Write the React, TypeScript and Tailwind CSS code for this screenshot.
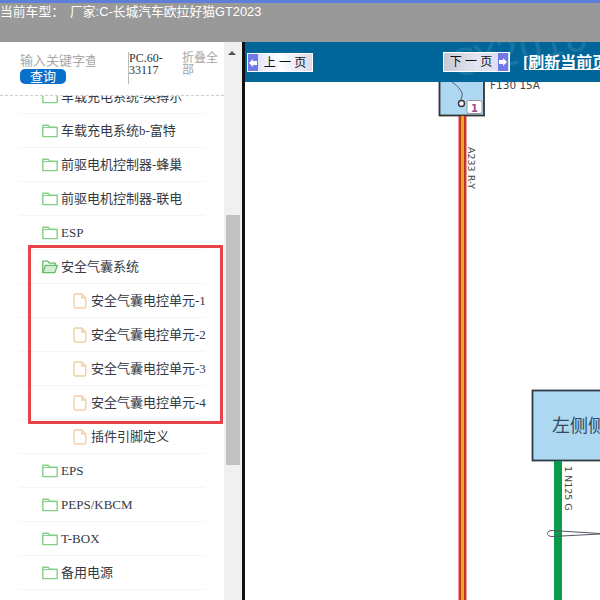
interface TreeRow {
  label: string;
  kind: "folder" | "open" | "file";
}

const rows: TreeRow[] = [
  { label: "车载充电系统-英搏尔", kind: "folder" },
  { label: "车载充电系统b-富特", kind: "folder" },
  { label: "前驱电机控制器-蜂巢", kind: "folder" },
  { label: "前驱电机控制器-联电", kind: "folder" },
  { label: "ESP", kind: "folder" },
  { label: "安全气囊系统", kind: "open" },
  { label: "安全气囊电控单元-1", kind: "file" },
  { label: "安全气囊电控单元-2", kind: "file" },
  { label: "安全气囊电控单元-3", kind: "file" },
  { label: "安全气囊电控单元-4", kind: "file" },
  { label: "插件引脚定义", kind: "file" },
  { label: "EPS", kind: "folder" },
  { label: "PEPS/KBCM", kind: "folder" },
  { label: "T-BOX", kind: "folder" },
  { label: "备用电源", kind: "folder" },
  { label: "空调系统", kind: "folder" },
];

function FolderIcon() {
  return (
    <svg width="16" height="14" viewBox="0 0 16 14" fill="none" stroke="#85cf88" strokeWidth="1.4" className="shrink-0">
      <path d="M0.8 12.6V1.2h5.4l1.4 2h7.6v9.4z" strokeLinejoin="round" />
      <path d="M0.8 3.6h14.4" strokeWidth="1" />
    </svg>
  );
}

function OpenFolderIcon() {
  return (
    <svg width="16" height="14" viewBox="0 0 16 14" fill="#d3efd3" stroke="#62bb68" strokeWidth="1.3" className="shrink-0">
      <path d="M0.8 12.6V1.2h5l1.4 2h6v2.2" strokeLinejoin="round" fill="none" />
      <path d="M0.8 12.6l2.6-7.2h12l-2.6 7.2z" strokeLinejoin="round" />
    </svg>
  );
}

function FileIcon() {
  return (
    <svg width="14" height="16" viewBox="0 0 14 16" fill="none" stroke="#f3cfa4" strokeWidth="1.4" className="shrink-0">
      <path d="M2.4 1h6.4l4 4v8.6a1.4 1.4 0 0 1-1.4 1.4H2.4A1.4 1.4 0 0 1 1 13.6V2.4A1.4 1.4 0 0 1 2.4 1z" strokeLinejoin="round" />
      <path d="M8.8 1v4h4" />
    </svg>
  );
}

function Row({ row }: { row: TreeRow }) {
  return (
    <div className={`flex h-[34px] w-[184px] shrink-0 items-center border-b border-[#f5f5f5] ${row.kind === "file" ? "pl-[53px]" : "pl-[22px]"}`}>
      {row.kind === "folder" && <FolderIcon />}
      {row.kind === "open" && <OpenFolderIcon />}
      {row.kind === "file" && <FileIcon />}
      <span className={`whitespace-nowrap font-['Liberation_Serif','Noto_Sans_CJK_SC',serif] text-[13px] text-[#333a45] ${row.kind === "file" ? "ml-[4px]" : "ml-[3px]"}`}>{row.label}</span>
    </div>
  );
}

function Sidebar() {
  return (
    <div className="flex h-full w-[242px] shrink-0 bg-white">
      <div className="flex h-full w-[224px] flex-col">
        <div className="flex h-[53px] shrink-0 items-start">
          <div className="ml-[20px] mt-[11px] w-[76px]">
            <div className="h-[16px] w-[75px] overflow-hidden whitespace-nowrap text-[13px] leading-[16px] text-[#a8a8a8]">输入关键字查询</div>
            <div className="h-[15px] w-[46px] rounded-[5px] bg-[#0a6fc9] text-center text-[13px] leading-[15px] text-white">查询</div>
          </div>
          <div className="ml-[32px] mt-[10px] h-[32px] w-[50px] whitespace-nowrap border-l border-[#bbb] font-['Liberation_Serif',serif] text-[12px] leading-[12px] text-[#333]">
            PC.60-<br />33117
          </div>
          <div className="ml-[4px] mt-[10px] w-[37px] text-[12px] leading-[12px] text-[#a8a8a8]">折叠全部</div>
        </div>
        <div className="relative min-h-0 flex-1 overflow-hidden border-t border-dashed border-[#ccc]">
          <div className="ml-[20px] mt-[-16px] flex flex-col">
            {rows.map((row) => (
              <Row key={row.label} row={row} />
            ))}
          </div>
          <div className="absolute left-[28px] top-[149px] h-[179px] w-[195px] border-[3px] border-[#e8434a]" />
        </div>
      </div>
      <div className="relative h-full w-[18px] bg-[#f0f0f0]">
        <div className="absolute left-[4px] top-[9px] h-0 w-0 border-x-[4px] border-b-[4px] border-x-transparent border-b-[#555]" />
        <div className="absolute left-[2px] top-[173px] h-[250px] w-[14px] bg-[#c1c1c1]" />
      </div>
    </div>
  );
}

function Diagram() {
  return (
    <svg width="355" height="518" viewBox="0 0 355 518" className="block">
      <text x="245" y="7" fontSize="10.5" fill="#444" fontFamily="DejaVu Sans">F130 15A</text>
      <rect x="194.5" y="-6" width="44.5" height="39.5" fill="#aed8f2" stroke="#333" strokeWidth="1.8" />
      <path d="M207 0c7 5 11 10 10 14c-1 3-1 4-1 4" fill="none" stroke="#556" />
      <circle cx="216.5" cy="21.5" r="3" fill="#fff" stroke="#333" strokeWidth="1.4" />
      <rect x="222" y="18.5" width="15" height="13" rx="2" fill="#fff" stroke="#999" />
      <text x="226" y="29.5" fontSize="10" fontWeight="700" fill="#a04a80" fontFamily="DejaVu Sans">1</text>
      <rect x="213.5" y="34" width="8" height="484" fill="#e33030" />
      <rect x="215.5" y="34" width="4" height="484" fill="#8a3a10" />
      <rect x="216" y="34" width="3" height="484" fill="#f0a818" />
      <text transform="translate(223 65) rotate(90)" fontSize="9.5" fill="#444" fontFamily="DejaVu Sans">A233 R-Y</text>
      <rect x="287.5" y="308.5" width="100" height="70" fill="#aed8f2" stroke="#2f3b46" strokeWidth="1.8" />
      <text x="307" y="350" fontSize="18" fill="#2c4a60" fontFamily="Noto Sans CJK SC">左侧侧气囊</text>
      <rect x="309" y="379" width="8" height="139" fill="#0a9a4c" />
      <text transform="translate(319.5 384) rotate(90)" fontSize="9.5" fill="#444" fontFamily="DejaVu Sans">1 N125 G</text>
      <path d="M355 451.5L307 448.5c-6 0-6 6 0 6L355 452" fill="none" stroke="#556" strokeWidth="1" />
    </svg>
  );
}

function Arrow({ dir }: { dir: "prev" | "next" }) {
  return (
    <span className={`flex h-full w-[10px] shrink-0 items-center justify-center bg-[#7079e6] ${dir === "next" ? "mr-[1px]" : ""}`}>
      <svg width="8" height="8" viewBox="0 0 8 8" fill="#fff">
        {dir === "prev" ? <path d="M0 4l4-4v2h4v4H4v2z" /> : <path d="M8 4L4 0v2H0v4h4v2z" />}
      </svg>
    </span>
  );
}

function PageButton({ label, dir }: { label: string; dir: "prev" | "next" }) {
  return (
    <div className={`flex items-center border border-white text-[12px] text-[#111] ${dir === "prev" ? "h-[19px] w-[66px] bg-gradient-to-r from-[#d5d9f7] via-white to-[#d9dbee]" : "h-[20px] w-[67px] bg-gradient-to-r from-[#c9c9d6] via-[#e4e5f2] to-[#d8d9ef]"}`}>
      {dir === "prev" && <Arrow dir="prev" />}
      <span className="flex-1 whitespace-pre text-center">{label}</span>
      {dir === "next" && <Arrow dir="next" />}
    </div>
  );
}

export default function App() {
  return (
    <div className="flex h-[600px] w-[600px] flex-col overflow-hidden bg-white font-['Liberation_Sans','Noto_Sans_CJK_SC',sans-serif]">
      <div className="h-[42px] shrink-0 bg-[#999999]">
        <div className="h-[3px] bg-[#5d7fd9]" />
        <div className="whitespace-pre text-[12.8px] leading-[17px] text-white">
          当前车型：<span className="ml-[6px]">厂家:C-长城汽车欧拉好猫GT2023</span>
        </div>
      </div>
      <div className="flex min-h-0 flex-1">
        <Sidebar />
        <div className="h-full w-[3px] shrink-0 bg-[#111]" />
        <div className="min-w-0 flex-1">
          <div className="relative flex h-[40px] items-center overflow-hidden whitespace-nowrap bg-[#006699]">
            <span className="absolute left-[205px] top-[-18px] rotate-[-12deg] font-['DejaVu_Sans',sans-serif] text-[36px] text-white/10">CY2018</span>
            <div className="relative ml-[2px] mt-[1px]">
              <PageButton label="上 一 页" dir="prev" />
            </div>
            <div className="relative ml-[130px]">
              <PageButton label="下 一 页" dir="next" />
            </div>
            <span className="relative mt-[12px] h-[7px] w-[4px] border-b border-white" />
            <span className="relative ml-[13px] mt-[1px] font-['Liberation_Serif','Noto_Sans_CJK_SC',serif] text-[16px] font-bold text-white underline">[刷新当前页]</span>
          </div>
          <Diagram />
        </div>
      </div>
    </div>
  );
}
